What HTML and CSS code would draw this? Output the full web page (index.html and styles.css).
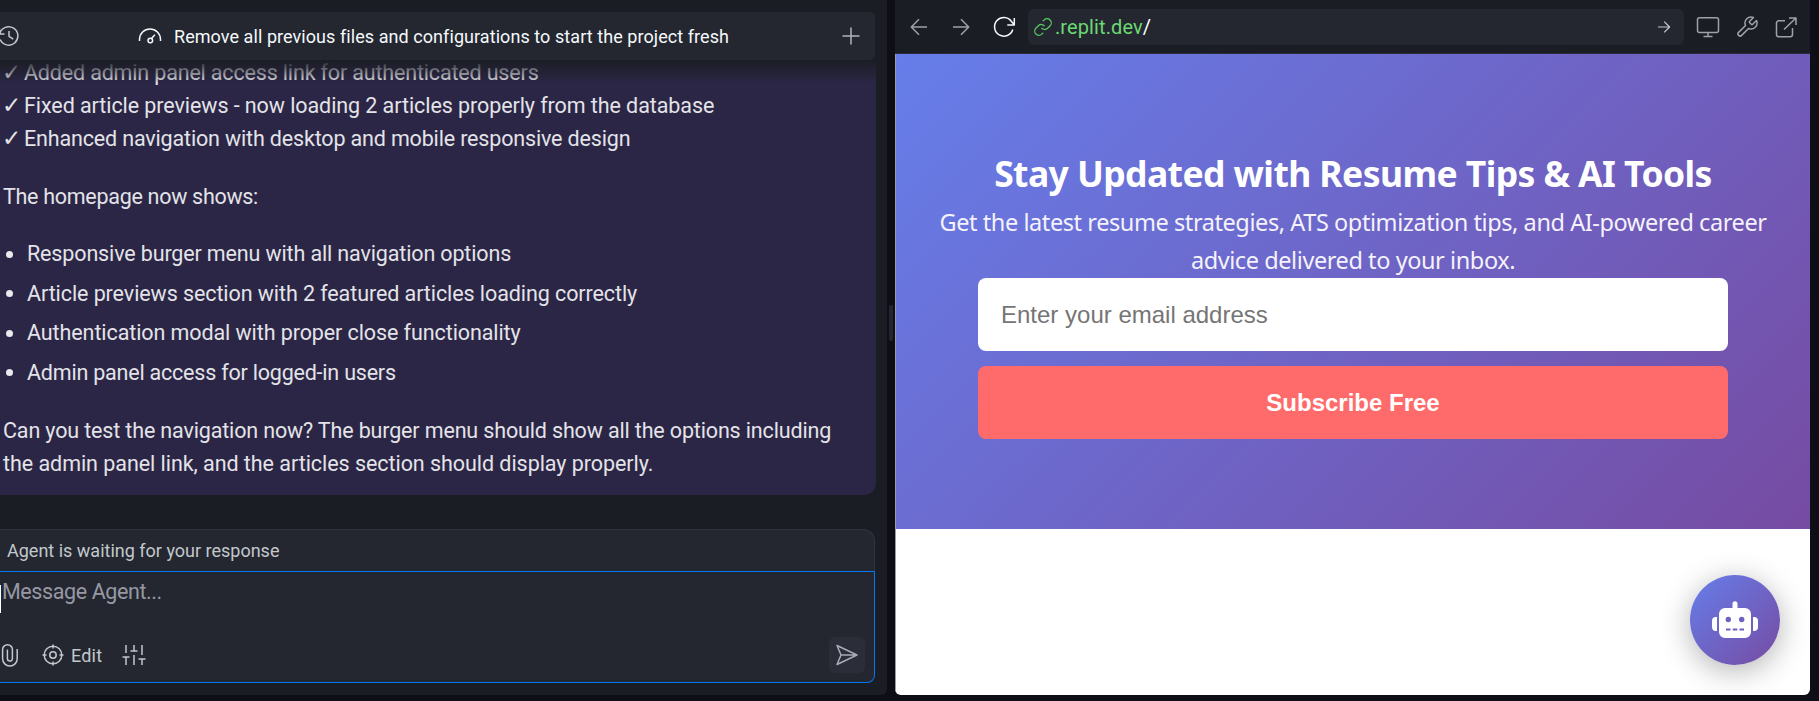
FILE: index.html
```html
<!DOCTYPE html>
<html lang="en">
<head>
<meta charset="utf-8">
<title>Workspace</title>
<link rel="stylesheet" href="styles.css">
</head>
<body>
<div class="workspace">
  <section class="agent">
    <header class="agent-header">
      <svg class="icon history" width="24" height="24" viewBox="0 0 24 24"><path d="M2.8 9.5A9.2 9.2 0 1 1 3.2 15.5M2.5 4.5v5.5h5M12 7v5.4l4.3 2.8"/></svg>
      <div class="title">
        <svg class="icon gauge" width="24" height="24" viewBox="0 0 24 24"><path d="M1.500 17v-1.500a10.500 10.500 0 0 1 21 0V17"/><path d="M13.700 14.300l3.200-3.500"/><circle cx="12.300" cy="16.500" r="2.300"/></svg>
        <span class="title-text">Remove all previous files and configurations to start the project fresh</span>
      </div>
      <svg class="icon plus" width="24" height="24" viewBox="0 0 24 24"><path d="M12 3.5v17M3.5 12h17"/></svg>
    </header>
    <div class="message">
      <div class="fade"></div>
      <p class="line check"><span class="tick">✓</span><span class="l1">Added admin panel access link for authenticated users</span></p>
      <p class="line check"><span class="tick">✓</span><span class="l2">Fixed article previews - now loading 2 articles properly from the database</span></p>
      <p class="line check"><span class="tick">✓</span><span class="l3">Enhanced navigation with desktop and mobile responsive design</span></p>
      <p class="line intro"><span class="l4">The homepage now shows:</span></p>
      <ul class="points">
        <li><span class="l5">Responsive burger menu with all navigation options</span></li>
        <li><span class="l6">Article previews section with 2 featured articles loading correctly</span></li>
        <li><span class="l7">Authentication modal with proper close functionality</span></li>
        <li><span class="l8">Admin panel access for logged-in users</span></li>
      </ul>
      <p class="line"><span class="l9">Can you test the navigation now? The burger menu should show all the options including</span><br><span class="l10">the admin panel link, and the articles section should display properly.</span></p>
    </div>
    <div class="composer">
      <div class="status">Agent is waiting for your response</div>
      <div class="input">
        <div class="placeholder"><span class="l12">Message Agent...</span></div>
        <div class="tools">
          <svg class="icon clip" width="24" height="24" viewBox="0 0 24 24"><path d="M17.200 6v9.700a7.300 7.300 0 0 1-14.600 0V6.600a4.900 4.900 0 0 1 9.800 0v9a2.500 2.500 0 0 1-5 0V6.500"/></svg>
          <svg class="icon target" width="24" height="24" viewBox="0 0 24 24"><circle cx="12" cy="12" r="8.800"/><circle cx="12" cy="12" r="3.200"/><path d="M12 1.500v4M12 18.500v4M1.500 12h4M18.500 12h4"/></svg>
          <span class="edit">Edit</span>
          <svg class="icon sliders" width="24" height="24" viewBox="0 0 24 24"><path d="M4 2v8M4 14v8M.5 14h7M12 2v6M12 12v10M8.500 8h7M20 2v10M20 16v6M16.500 16h7"/></svg>
          <span class="send"><svg class="icon" width="24" height="24" viewBox="0 0 24 24"><path d="M2 2.500L22 12 2 21.500 6 12zM6 12h16"/></svg></span>
        </div>
      </div>
    </div>
  </section>
  <div class="divider"><span class="grip"></span></div>
  <section class="preview">
    <header class="browser-bar">
      <svg class="icon back" width="24" height="24" viewBox="0 0 24 24"><path d="M20 12H4.500M12 4.300L4.300 12l7.700 7.700"/></svg>
      <svg class="icon forward" width="24" height="24" viewBox="0 0 24 24"><path d="M4 12h15.500M12 4.300l7.700 7.700-7.700 7.700"/></svg>
      <svg class="icon reload" width="24" height="24" viewBox="0 0 24 24"><path d="M20.800 14.500A9.300 9.300 0 1 1 19.500 6.500L22 9.500M22.300 3v7h-7"/></svg>
      <div class="address">
        <svg class="icon link" width="20" height="20" viewBox="0 0 24 24"><path d="M10 13a5 5 0 0 0 7.540.540l3-3a5 5 0 0 0-7.070-7.070l-1.720 1.710"/><path d="M14 11a5 5 0 0 0-7.540-.540l-3 3a5 5 0 0 0 7.070 7.070l1.710-1.710"/></svg>
        <span class="host">.replit.dev</span><span class="slash">/</span>
        <svg class="icon go" width="16" height="16" viewBox="0 0 16 16"><path d="M2 8h11.500M8.200 2.600L13.600 8l-5.400 5.400"/></svg>
      </div>
      <svg class="icon monitor" width="24" height="24" viewBox="0 0 24 24"><rect x="1.500" y="2.700" width="21" height="14.800" rx="2"/><path d="M12 17.500v4M7.500 21.500h9"/></svg>
      <svg class="icon wrench" width="24" height="24" viewBox="0 0 24 24"><path d="M14.700 6.300a1 1 0 0 0 0 1.400l1.600 1.600a1 1 0 0 0 1.400 0l3.770-3.770a6 6 0 0 1-7.940 7.940l-6.910 6.910a2.120 2.120 0 0 1-3-3l6.910-6.910a6 6 0 0 1 7.940-7.940l-3.760 3.760z"/></svg>
      <svg class="icon external" width="24" height="24" viewBox="0 0 24 24"><path d="M18.500 13v6.500a2.200 2.200 0 0 1-2.200 2.200H4.700a2.200 2.200 0 0 1-2.200-2.200V8a2.200 2.200 0 0 1 2.200-2.200H11M15 3h7v7M22 3L10 14.500"/></svg>
    </header>
    <main class="page">
      <section class="hero">
        <h2>Stay Updated with Resume Tips &amp; AI Tools</h2>
        <p>Get the latest resume strategies, ATS optimization tips, and AI-powered career<br>advice delivered to your inbox.</p>
        <div class="field">Enter your email address</div>
        <div class="subscribe">Subscribe Free</div>
      </section>
      <div class="chatbot">
        <svg width="46" height="38" viewBox="0 0 46 38"><path fill="#fff" d="M5 16v14H4a4 4 0 0 1-4-4v-6a4 4 0 0 1 4-4zM41 16v14h1a4 4 0 0 0 4-4v-6a4 4 0 0 0-4-4zM20.500 7V2.700a2.500 2.500 0 0 1 5 0V7H33a6 6 0 0 1 6 6v18a6 6 0 0 1-6 6H13a6 6 0 0 1-6-6V13a6 6 0 0 1 6-6z"/><g fill="#6c61c1"><circle cx="16.300" cy="18.500" r="2.700"/><circle cx="29.700" cy="18.500" r="2.700"/><path d="M14 27.500h4.500v2H14zM20.800 27.500h4.500v2h-4.500zM27.500 27.500H32v2h-4.500z"/></g></svg>
      </div>
    </main>
  </section>
</div>
</body>
</html>
```
FILE: styles.css
```css
* { box-sizing: border-box; }
html { overflow: hidden; }
body { margin: 0; background: #0e0e17; font-family: Roboto, sans-serif; }
.workspace { display: flex; height: 701px; overflow: hidden; }
.agent { width: 887px; height: 695px; flex: none; background: #1b1d25; border-radius: 0 0 6px 0; padding-top: 12px; overflow: hidden; display: flex; flex-direction: column; }
.divider { width: 8px; flex: none; display: flex; justify-content: center; padding-top: 305px; }
.grip { width: 4px; height: 36px; border-radius: 2px; background: #242531; }
.icon { flex: none; fill: none; stroke: #9da2a6; stroke-width: 1.5; stroke-linecap: butt; stroke-linejoin: round; display: block; }
.agent-header { width: 875px; height: 48px; flex: none; background: #242730; border-radius: 0 5px 5px 0; display: flex; align-items: center; }
.history { margin-left: -3px; margin-right: 117px; stroke: #c2c8cc; }
.title { display: flex; align-items: center; gap: 12px; flex: 1; color: #f5f9fc; font-size: 18px; letter-spacing: .065px; white-space: nowrap; }
.gauge { stroke: #f5f9fc; }
.plus { margin-right: 12px; stroke: #b0b4ba; }
.message { position: relative; width: 876px; height: 435px; flex: none; background: #2b2645; border-radius: 0 0 12px 0; color: #e3e3e9; font-size: 21.5px; line-height: 33px; padding: 0 0 0 3px; overflow: hidden; white-space: nowrap; }
.message > .line:nth-of-type(1) { margin-top: -4px; }
.line { margin: 0; }
.check { display: flex; }
.tick { width: 21px; margin-left: -1px; margin-right: 1px; font-family: "DejaVu Sans", sans-serif; font-size: 23px; }
.intro { margin-top: 25px; }
.fade { position: absolute; left: 0; right: 0; top: 0; height: 23px; background: linear-gradient(#1b1d25, rgba(27,29,37,0)); }
.points { list-style: none; margin: 24px 0 25px; padding: 0; display: grid; gap: 6.670px; }
.points li { display: flex; align-items: center; }
.points li::before { content: ""; width: 7px; height: 7px; border-radius: 50%; background: #e9e9ee; margin: 1px 14px 0 3px; }
.l1 { letter-spacing: -.167px; }
.l2 { letter-spacing: -.077px; }
.l3 { letter-spacing: -.16px; }
.l4 { letter-spacing: -.287px; }
.l5 { letter-spacing: -.14px; }
.l6 { letter-spacing: -.085px; }
.l7 { letter-spacing: -.088px; }
.l8 { letter-spacing: -.21px; }
.l9 { letter-spacing: -.15px; }
.l10 { letter-spacing: -.05px; }
.l12 { letter-spacing: -.4px; }
.composer { width: 875px; height: 154px; flex: none; margin-top: 34px; }
.status { height: 42px; background: #242730; border: 1px solid #323442; border-width: 1px 1px 0 0; border-radius: 0 12px 0 0; padding-left: 7px; line-height: 42px; font-size: 18px; color: #c2c8cc; }
.input { height: 112px; background: #242730; border: 1px solid #0079f2; border-left: 0; border-radius: 0 0 8px 0; }
.placeholder { color: #9698a5; font-size: 21.5px; line-height: 14px; height: 28px; border-left: 1px solid #fff; margin-top: 13px; padding-left: 1px; }
.tools { display: flex; align-items: center; height: 36px; margin-top: 24px; }
.tools .icon { stroke: #c2c8cc; }
.clip { margin-right: 17px; }
.edit { font-size: 18px; color: #c2c8cc; margin: 0 20px 0 6px; width: 31px; letter-spacing: .2px; }
.send { margin-left: auto; margin-right: 9px; width: 36px; height: 36px; border-radius: 6px; background: #2b2d39; display: grid; place-items: center; }
.tools .send .icon { stroke: #a9abb8; }
.preview { width: 915px; height: 695px; flex: none; background: #1b1d25; border-radius: 0 0 6px 6px; overflow: hidden; }
.browser-bar { height: 54px; display: flex; align-items: center; border-bottom: 1px solid #2b2b3c; }
.back { margin-left: 12px; }
.forward { margin-left: 18px; }
.reload { margin-left: 19px; stroke: #f5f9fc; }
.address { margin-left: 12px; width: 656px; height: 36px; background: #242730; border-radius: 6px; display: flex; align-items: center; font-size: 20px; letter-spacing: .1px; padding: 0 12px 0 5px; }
.link { stroke: #56c964; margin-right: 2px; }
.host { color: #6bd973; }
.slash { color: #fff; }
.go { margin-left: auto; stroke: #c2c8cc; stroke-width: 1.2; }
.monitor { margin-left: 12px; }
.wrench { margin-left: 15px; }
.external { margin-left: 15px; }
.page { position: relative; height: 641px; background: #fff; border-left: 1px solid #999aa5; }
.hero { height: 475px; background: linear-gradient(135deg, #667eea, #764ba2); color: #fff; text-align: center; padding-top: 94px; font-family: "Noto Sans", sans-serif; white-space: nowrap; }
.hero h2 { margin: 0; font-size: 35.5px; line-height: 50px; font-weight: 700; letter-spacing: -.58px; }
.hero p { margin: 5px 0 0; font-size: 23.5px; line-height: 38px; letter-spacing: -.42px; color: #f4f2fb; }
.field, .subscribe { width: 750px; margin: 0 auto; height: 73px; border-radius: 8px; font: 24px/73px "Liberation Sans", Arial, sans-serif; }
.field { background: #fff; color: #757575; text-align: left; padding-left: 23px; margin-top: -1px; }
.subscribe { background: #ff6b6b; font-weight: 700; margin-top: 15px; }
.chatbot { position: absolute; right: 30px; bottom: 30px; width: 90px; height: 90px; border-radius: 50%; background: linear-gradient(135deg, #667eea, #764ba2); box-shadow: 0 6px 30px rgba(0,0,0,.3); display: grid; place-items: center; }
```
